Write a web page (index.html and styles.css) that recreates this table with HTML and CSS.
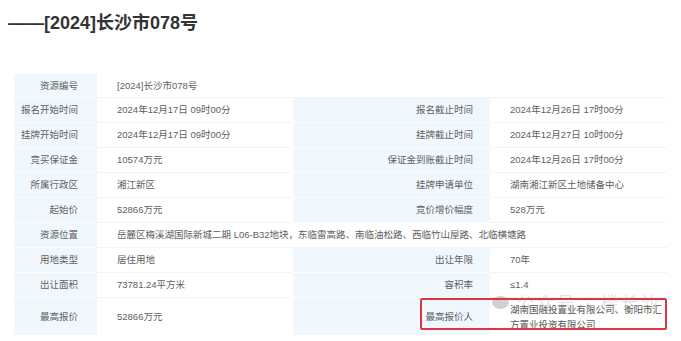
FILE: index.html
```html
<!DOCTYPE html>
<html lang="zh-CN">
<head>
<meta charset="utf-8">
<title>[2024]长沙市078号</title>
<link rel="stylesheet" href="styles.css">
</head>
<body>
<h1 class="title">——[2024]长沙市078号</h1>
<div class="wrap">
<table class="info">
  <colgroup>
    <col class="c1"><col class="c2"><col class="c3"><col class="c4">
  </colgroup>
  <tr><th>资源编号</th><td colspan="3">[2024]长沙市078号</td></tr>
  <tr><th>报名开始时间</th><td>2024年12月17日 09时00分</td><th class="r">报名截止时间</th><td>2024年12月26日 17时00分</td></tr>
  <tr><th>挂牌开始时间</th><td>2024年12月17日 09时00分</td><th class="r">挂牌截止时间</th><td>2024年12月27日 10时00分</td></tr>
  <tr><th>竞买保证金</th><td>10574万元</td><th class="r">保证金到账截止时间</th><td>2024年12月26日 17时00分</td></tr>
  <tr><th>所属行政区</th><td>湘江新区</td><th class="r">挂牌申请单位</th><td>湖南湘江新区土地储备中心</td></tr>
  <tr><th>起始价</th><td>52866万元</td><th class="r">竞价增价幅度</th><td>528万元</td></tr>
  <tr><th>资源位置</th><td colspan="3">岳麓区梅溪湖国际新城二期 L06-B32地块，东临雷高路、南临油松路、西临竹山屋路、北临横塘路</td></tr>
  <tr><th>用地类型</th><td>居住用地</td><th class="r">出让年限</th><td>70年</td></tr>
  <tr><th>出让面积</th><td>73781.24平方米</td><th class="r">容积率</th><td>≤1.4</td></tr>
  <tr class="tall"><th>最高报价</th><td>52866万元</td><th class="r">最高报价人</th><td class="bidder">湖南国融投置业有限公司、衡阳市汇方置业投资有限公司</td></tr>
</table>
<div class="watermark"><span class="wm-icon"></span>公众号 · 楼长沙</div>
<div class="mark"></div>
</div>
</body>
</html>
```
FILE: styles.css
```css
html, body {
  margin: 0;
  padding: 0;
  background: #ffffff;
}
body {
  padding: 0 8px;
  font-family: "Liberation Sans", "Noto Sans CJK SC", sans-serif;
}
.title {
  margin: 0;
  padding-top: 11px;
  height: 74px;
  box-sizing: border-box;
  font-size: 18px;
  line-height: 24px;
  font-weight: bold;
  color: #333333;
}
.wrap {
  position: relative;
  margin-left: 6px;
  width: 653px;
}
.info {
  border-collapse: collapse;
  table-layout: fixed;
  width: 653px;
  font-size: 9.5px;
  color: #606060;
}
.c1 { width: 83px; }
.c2 { width: 196px; }
.c3 { width: 197px; }
.c4 { width: 177px; }
.info th, .info td {
  height: 24px;
  padding: 0;
  border-bottom: 1px solid #f1f4f7;
  vertical-align: middle;
  line-height: 14px;
  white-space: nowrap;
}
.info th {
  background: #f1f8fd;
  font-weight: normal;
  text-align: right;
  padding-right: 19px;
  border-bottom-color: #fbfdff;
}
.info th.r {
  padding-right: 17px;
}
.info td {
  text-align: left;
  padding-left: 20px;
  background: #ffffff;
}
.info tr:first-child th, .info tr:first-child td {
  height: 23px;
}
.info .tall th, .info .tall td {
  height: 36px;
  border-bottom: none;
}
.info td.bidder {
  white-space: normal;
  padding-right: 2px;
  line-height: 15px;
  color: #555555;
  padding-top: 1px;
}
.mark {
  position: absolute;
  left: 406px;
  top: 224px;
  width: 247px;
  height: 32px;
  box-sizing: border-box;
  border: 2px solid #d9363e;
  border-radius: 2px;
  pointer-events: none;
}
.watermark {
  position: absolute;
  left: 478px;
  top: 220px;
  font-size: 17px;
  line-height: 20px;
  color: rgba(150, 150, 150, 0.3);
  letter-spacing: 3px;
  pointer-events: none;
  white-space: nowrap;
}
.wm-icon {
  display: inline-block;
  width: 17px;
  height: 13px;
  border-radius: 50%;
  background: rgba(140, 140, 140, 0.4);
  margin-right: 8px;
  vertical-align: 0;
}
```
